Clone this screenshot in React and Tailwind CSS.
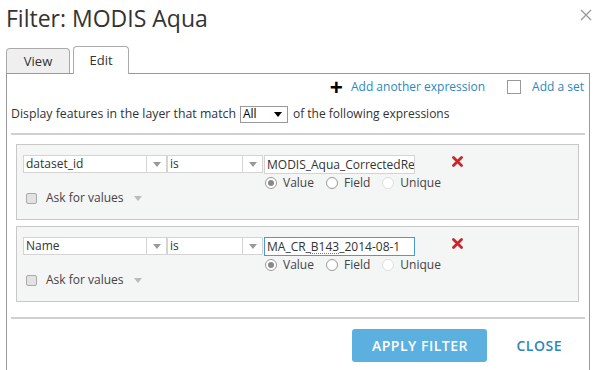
import React from 'react';

const Caret = ({ className = '' }) => (
    <svg className={className} width="8" height="5" viewBox="0 0 8 5">
        <path d="M0 0h8L4 5z" fill="currentColor" />
    </svg>
);

const Select = ({ label, width }) => (
    <div className={`flex h-[18px] border border-[#d4d4d4] bg-white ${width}`}>
        <span className="flex-1 pl-[2px] leading-[16px] text-[#333]">{label}</span>
        <span className="flex w-[20px] items-center justify-center border-l border-[#d4d4d4] text-[#999]">
            <Caret />
        </span>
    </div>
);

const Radio = ({ checked, disabled, label }) => (
    <label className="flex items-center gap-[6px] mr-[12px]">
        <span className={`flex h-[12px] w-[12px] items-center justify-center rounded-full border bg-white ${disabled ? 'border-[#ddd]' : 'border-[#999]'}`}>
            {checked && <span className="h-[6px] w-[6px] rounded-full bg-[#888]" />}
        </span>
        <span className="text-[#444]">{label}</span>
    </label>
);

const RedX = () => (
    <svg width="11" height="11" viewBox="0 0 11 11">
        <path d="M1.5 1.5l8 8M9.5 1.5l-8 8" stroke="#c8262b" strokeWidth="2.8" strokeLinecap="round" />
    </svg>
);

const Expression = ({ field, value, focused }) => (
    <div className="ml-[5px] mr-[6px] h-[76px] border border-[#c8c8c8] bg-[#f4f5f5] pl-[6px] pt-[10px]">
        <div className="flex items-start">
            <Select label={field} width="w-[144px]" />
            <Select label="is" width="w-[96px]" />
            <div className="ml-[1px] flex w-[151px] flex-col">
                <div className={`h-[19px] w-[151px] overflow-hidden whitespace-nowrap border bg-white pl-[2px] leading-[17px] text-[#333] ${focused ? 'border-[#4a9ad9]' : 'border-[#d4d4d4]'}`}>
                    {focused ? (
                        <>MA_CR_<span className="underline decoration-dotted decoration-[#e05050] underline-offset-[1px]">B143</span>_2014-08-1</>
                    ) : value}
                </div>
                <div className="flex whitespace-nowrap pl-[1px] leading-[18px]">
                    <Radio checked label="Value" />
                    <Radio label="Field" />
                    <Radio disabled label="Unique" />
                </div>
            </div>
            <span className="ml-[37px] mt-[1px]"><RedX /></span>
        </div>
        <div className="-mt-[3px] flex items-center pl-[3px]">
            <span className="h-[11px] w-[11px] rounded-[2px] border border-[#aaa] bg-[#e2e2e2]" />
            <span className="ml-[9px] text-[#444]">Ask for values</span>
            <Caret className="ml-[10px] text-[#bbb]" />
        </div>
    </div>
);

export default function App() {
    return (
        <div className="relative h-[370px] w-[600px] overflow-hidden bg-white font-['Open_Sans',sans-serif] text-[12px]">
            <div className="flex items-start justify-between pl-[6px] pr-[8px] pt-[2px]">
                <h1 className="text-[23px] leading-[32px] text-[#333]">Filter: MODIS Aqua</h1>
                <svg className="mt-[7px]" width="12" height="12" viewBox="0 0 12 12">
                    <path d="M1 1l10 10M11 1L1 11" stroke="#999" strokeWidth="1.3" />
                </svg>
            </div>

            <div className="ml-[6px] mt-[12px] flex items-end gap-[3px]">
                <div className="h-[25px] w-[64px] rounded-t-[4px] border border-b-0 border-[#aaa] bg-[#efefef] text-center leading-[24px] text-[#333] text-[13px]">View</div>
                <div className="relative -mb-px h-[28px] w-[56px] rounded-t-[4px] border border-b-0 border-[#aaa] bg-white text-center leading-[26px] text-[#333] text-[13px]">Edit</div>
            </div>

            <div className="ml-[6px] mr-[10px] h-[320px] border border-[#999] px-[4px]">
                <div className="flex items-center justify-end pt-[4px] pr-[1px]">
                    <span className="text-[23px] font-bold leading-[18px] text-black">+</span>
                    <span className="ml-[8px] text-[#2c87bd]">Add another expression</span>
                    <span className="ml-[22px] h-[14px] w-[14px] border border-[#999] bg-white" />
                    <span className="ml-[11px] text-[#2c87bd]">Add a set</span>
                </div>
                <div className="mt-[9px] flex items-center text-[#333]">
                    <span className="text-[12.3px]">Display features in the layer that match</span>
                    <div className="ml-[4px] flex h-[17px] w-[48px] items-center justify-between border border-[#999] pl-[2px] pr-[5px] text-black">
                        <span>All</span>
                        <Caret className="text-black" />
                    </div>
                    <span className="ml-[5px]">of the following expressions</span>
                </div>
                <div className="mt-[10px] h-[2px] bg-[#d0d0d0]" />
                <div className="mt-[9px] flex flex-col gap-[6px]">
                    <Expression field="dataset_id" value="MODIS_Aqua_CorrectedRe" />
                    <Expression field="Name" focused />
                </div>
                <div className="mt-[15px] h-[2px] bg-[#d0d0d0]" />
                <div className="mt-[10px] flex items-center justify-end pr-[23px]">
                    <button className="h-[33px] w-[135px] rounded-[3px] bg-[#5cb0e0] text-[14px] font-semibold tracking-[0.5px] text-white">APPLY FILTER</button>
                    <span className="ml-[29px] text-[14px] font-semibold tracking-[0.5px] text-[#2c87bd]">CLOSE</span>
                </div>
            </div>
        </div>
    );
}
